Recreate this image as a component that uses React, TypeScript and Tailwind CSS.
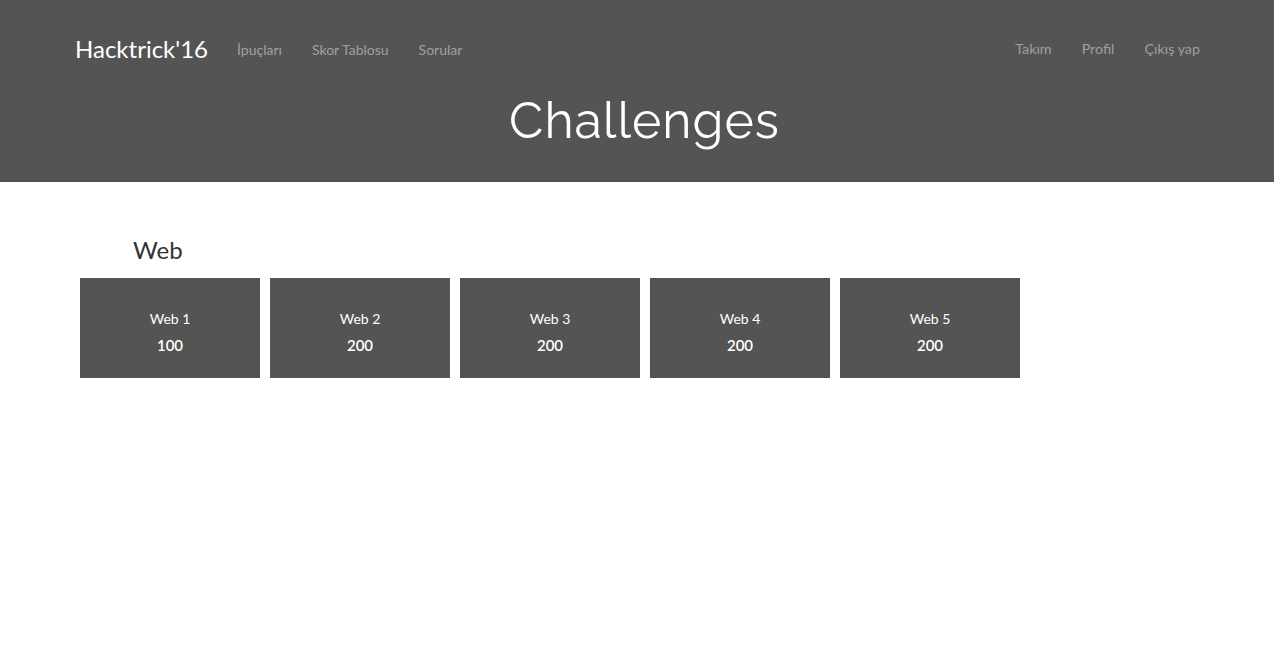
import React from "react";

const cards = [
  { name: "Web 1", pts: 100 },
  { name: "Web 2", pts: 200 },
  { name: "Web 3", pts: 200 },
  { name: "Web 4", pts: 200 },
  { name: "Web 5", pts: 200 },
];

export default function App() {
  return (
    <div className="min-h-[669px] bg-white" style={{ fontFamily: "Lato, 'Open Sans', sans-serif" }}>
      <header className="h-[182px] bg-[#545454]">
        <nav className="flex h-[98px] items-center justify-between pl-[75px] pr-[74px]">
          <div className="flex items-center">
            <span className="text-[24px] leading-none text-white">Hacktrick'16</span>
            <div className="ml-[29px] flex gap-[30px] text-[14px] text-[#a0a0a0]">
              <span>İpuçları</span>
              <span>Skor Tablosu</span>
              <span>Sorular</span>
            </div>
          </div>
          <div className="flex gap-[30px] text-[14.3px] text-[#a0a0a0]">
            <span>Takım</span>
            <span>Profil</span>
            <span>Çıkış yap</span>
          </div>
        </nav>
        <h1
          className="-mt-[2px] pl-[15px] text-center text-[50px] leading-none tracking-[1px] text-white"
          style={{ fontFamily: "Raleway, Lato, sans-serif" }}
        >
          Challenges
        </h1>
      </header>
      <main className="px-[80px] pt-[56px]">
        <h2 className="pl-[53px] text-[24px] leading-none text-[#333]">Web</h2>
        <div className="mt-[16px] flex gap-[10px]">
          {cards.map((c) => (
            <div
              key={c.name}
              className="flex h-[100px] w-[180px] flex-col items-center justify-center bg-[#545454] pt-[8px] text-white"
            >
              <span className="text-[14px] leading-none">{c.name}</span>
              <span className="mt-[12px] text-[15px] font-semibold leading-none">{c.pts}</span>
            </div>
          ))}
        </div>
      </main>
    </div>
  );
}
